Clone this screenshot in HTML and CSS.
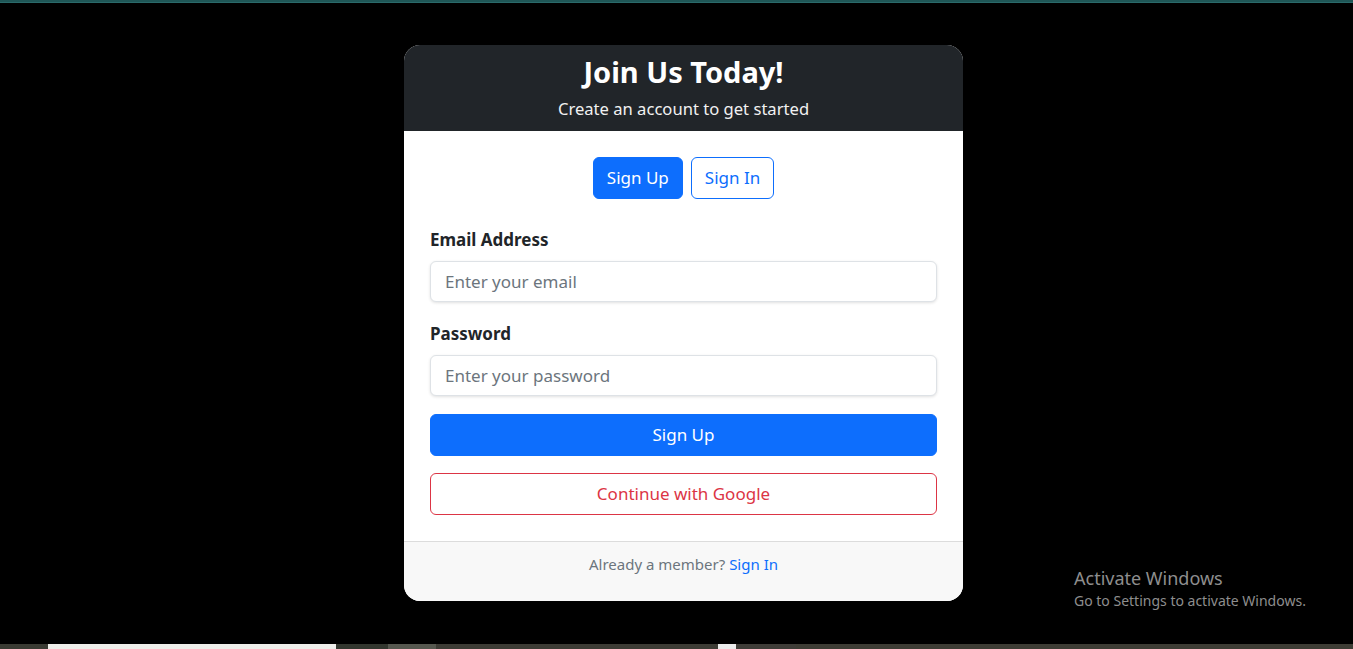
FILE: index.html
```html
<!DOCTYPE html>
<html lang="en">
<head>
<meta charset="utf-8">
<title>Join Us Today</title>
<link rel="stylesheet" href="styles.css">
</head>
<body>
<div class="topline"></div>
<main class="stage">
  <section class="card">
    <header class="card-header">
      <h3 class="title">Join Us Today!</h3>
      <p class="subtitle">Create an account to get started</p>
    </header>
    <div class="card-body">
      <div class="tabs">
        <button class="btn btn-primary">Sign Up</button>
        <button class="btn btn-outline-primary">Sign In</button>
      </div>
      <form class="form">
        <div class="field">
          <label class="label" for="email">Email Address</label>
          <input class="input" id="email" type="email" placeholder="Enter your email">
        </div>
        <div class="field">
          <label class="label" for="pw">Password</label>
          <input class="input" id="pw" type="password" placeholder="Enter your password">
        </div>
        <button type="button" class="btn btn-primary btn-block">Sign Up</button>
        <button type="button" class="btn btn-outline-danger btn-block">Continue with Google</button>
      </form>
    </div>
    <footer class="card-footer">
      <span class="muted">Already a member?</span> <a class="link" href="#">Sign In</a>
    </footer>
  </section>
</main>
<div class="watermark">
  <div class="wm-title">Activate Windows</div>
  <div class="wm-sub">Go to Settings to activate Windows.</div>
</div>
<div class="taskbar">
  <span class="tb tb1"></span>
  <span class="tb tb2"></span>
  <span class="tb tb3"></span>
  <span class="tb tb4"></span>
  <span class="tb tb5"></span>
  <span class="tb tb6"></span>
  <span class="tb tb7"></span>
  <span class="tb tb8"></span>
</div>
</body>
</html>
```

FILE: styles.css
```css
* { box-sizing: border-box; }
html, body {
  margin: 0;
  height: 649px;
  overflow: hidden;
  background: #000;
  font-family: "Noto Sans", "Open Sans", sans-serif;
}
body { display: flex; flex-direction: column; position: relative; }

.topline { height: 3px; background: #1f5656; border-bottom: 1px solid #2a6a6a; }

.stage {
  flex: 1;
  padding: 42px 0 0 404px;
}

.card {
  width: 559px;
  background: #fff;
  border-radius: 16px;
  overflow: hidden;
}

.card-header {
  height: 86px;
  background: #212529;
  color: #fff;
  text-align: center;
  padding-top: 9px;
}
.title {
  margin: 0;
  font-size: 29px;
  font-weight: 700;
  line-height: 36px;
}
.subtitle {
  margin: 6px 0 0;
  font-size: 16.6px;
  line-height: 26px;
  color: #f1f1f1;
}

.card-body { padding: 26px 26px 26px; }

.tabs {
  display: flex;
  justify-content: center;
  gap: 8px;
  margin-bottom: 28px;
}

.btn {
  font-family: inherit;
  font-size: 17px;
  height: 42px;
  line-height: 40px;
  padding: 0 13px;
  border-radius: 6px;
  border: 1px solid transparent;
  background: transparent;
  cursor: pointer;
}
.btn-primary { background: #0d6efd; border-color: #0d6efd; color: #fff; }
.btn-outline-primary { background: #fff; border-color: #0d6efd; color: #0d6efd; }
.btn-outline-danger { background: #fff; border-color: #dc3545; color: #dc3545; }
.btn-block { display: block; width: 100%; }

.form { display: flex; flex-direction: column; }
.field { display: flex; flex-direction: column; margin-bottom: 18px; }
.label {
  font-size: 17px;
  font-weight: 700;
  color: #212529;
  line-height: 26px;
  margin-bottom: 8px;
}
.field + .field .label { margin-top: 1px; }
.input {
  height: 41px;
  border: 1px solid #dee2e6;
  border-radius: 6px;
  padding: 0 14px;
  font-family: inherit;
  font-size: 17px;
  color: #212529;
  box-shadow: 0 1px 3px rgba(0,0,0,0.12);
}
.input::placeholder { color: #6c757d; }
.form .btn-primary { margin-bottom: 17px; }

.card-footer {
  height: 60px;
  background: #f8f8f8;
  border-top: 1px solid #dcdcdc;
  text-align: center;
  padding-top: 11px;
  font-size: 15px;
  line-height: 22px;
}
.muted { color: #6c757d; }
.link { color: #0d6efd; text-decoration: none; }

.watermark {
  position: absolute;
  left: 1074px;
  top: 566px;
  color: #8e8e8e;
}
.wm-title { font-size: 18px; line-height: 24px; }
.wm-sub { font-size: 14px; line-height: 21px; }

.taskbar {
  height: 5px;
  display: flex;
}
.tb { display: block; height: 100%; }
.tb1 { width: 48px; background: #3a3b33; }
.tb2 { width: 288px; background: #eeeeea; }
.tb3 { width: 52px; background: #33372f; }
.tb4 { width: 48px; background: #56584f; }
.tb5 { width: 282px; background: #3d3c35; }
.tb6 { width: 18px; background: #ebebeb; }
.tb7 { width: 60px; background: #3f3d38; }
.tb8 { flex: 1; background: #3e3d35; }
```
